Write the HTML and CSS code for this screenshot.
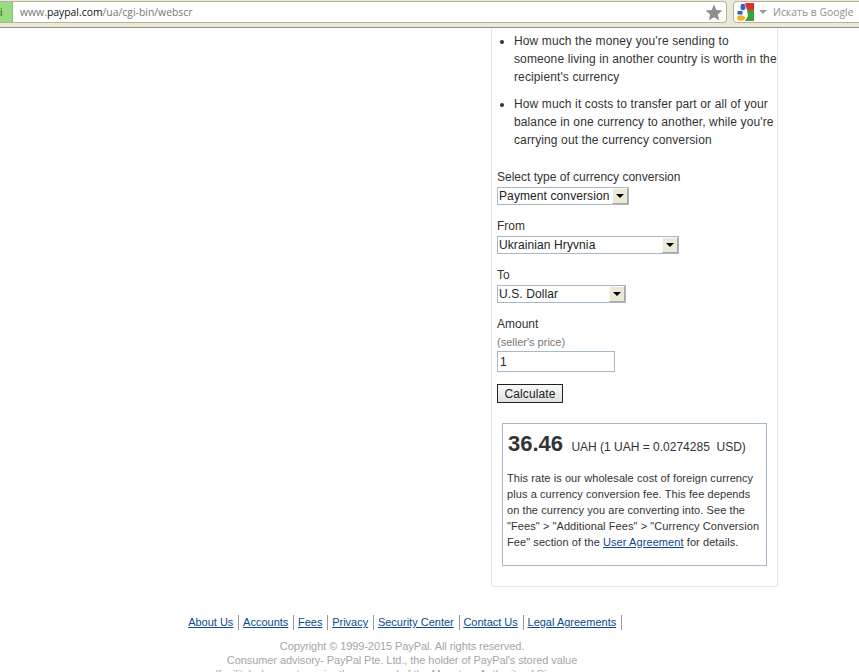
FILE: index.html
```html
<!DOCTYPE html>
<html lang="en">
<head>
    <meta charset="UTF-8">
    <meta name="viewport" content="width=device-width, initial-scale=1.0">
    <title>PayPal currency converter</title>
    <link rel="stylesheet" href="styles.css">
</head>
<body>

    <!-- Browser toolbar -->
    <div class="toolbar">
        <div class="address-bar">
            <span class="secure-tab">i</span>
            <span class="url">www.<b>paypal.com</b>/ua/cgi-bin/webscr</span>
            <svg class="star" width="18" height="17" viewBox="0 0 18 17">
                <path d="M9 0.5 L11.4 6 L17.4 6.5 L12.8 10.4 L14.2 16.3 L9 13.2 L3.8 16.3 L5.2 10.4 L0.6 6.5 L6.6 6 Z" fill="#8e8e8e"/>
            </svg>
        </div>
        <div class="search-bar">
            <svg class="google-icon" width="17" height="18" viewBox="0 0 17 18">
                <rect width="17" height="18" rx="2" fill="#fff"/>
                <path d="M8 0 H17 V7 H10 Z" fill="#d8322a"/>
                <path d="M10 7 H17 V18 H8 L11 13 Z" fill="#3f9e3c"/>
                <ellipse cx="6" cy="4" rx="2.5" ry="3.2" fill="#2f62c9"/>
                <rect x="0.5" y="8" width="5" height="3.5" fill="#2f62c9"/>
                <ellipse cx="4" cy="15" rx="4" ry="2.8" fill="#f0b323"/>
            </svg>
            <span class="search-caret"></span>
            <span class="search-text">Искать в Google</span>
        </div>
    </div>

    <div class="page">
        <div class="panel">
            <ul class="notes">
                <li>How much the money you're sending to someone living in another country is worth in the recipient's currency</li>
                <li>How much it costs to transfer part or all of your balance in one currency to another, while you're carrying out the currency conversion</li>
            </ul>

            <div class="field">
                <label>Select type of currency conversion</label>
                <div class="select select-type">
                    <select><option>Payment conversion</option></select>
                    <span class="arrow"></span>
                </div>
            </div>

            <div class="field">
                <label>From</label>
                <div class="select select-from">
                    <select><option>Ukrainian Hryvnia</option></select>
                    <span class="arrow"></span>
                </div>
            </div>

            <div class="field">
                <label>To</label>
                <div class="select select-to">
                    <select><option>U.S. Dollar</option></select>
                    <span class="arrow"></span>
                </div>
            </div>

            <div class="field">
                <label>Amount</label>
                <div class="hint">(seller's price)</div>
                <input class="amount" type="text" value="1">
            </div>

            <button class="calculate">Calculate</button>

            <div class="result">
                <div class="result-line"><strong>36.46</strong> <span>UAH (1 UAH = 0.0274285&nbsp; USD)</span></div>
                <p>This rate is our wholesale cost of foreign currency plus a currency conversion fee. This fee depends on the currency you are converting into. See the "Fees" &gt; "Additional Fees" &gt; "Currency Conversion Fee" section of the <a href="#">User Agreement</a> for details.</p>
            </div>
        </div>
    </div>

    <div class="footer">
        <ul class="footer-links">
            <li><a href="#">About Us</a></li>
            <li><a href="#">Accounts</a></li>
            <li><a href="#">Fees</a></li>
            <li><a href="#">Privacy</a></li>
            <li><a href="#">Security Center</a></li>
            <li><a href="#">Contact Us</a></li>
            <li><a href="#">Legal Agreements</a></li>
        </ul>
        <p class="copyright">Copyright © 1999-2015 PayPal. All rights reserved.<br>Consumer advisory- PayPal Pte. Ltd., the holder of PayPal's stored value<br>(facility), does not require the approval of the Monetary Authority of Singapore.</p>
    </div>

</body>
</html>
```

FILE: styles.css
```css
html, body {
    margin: 0;
    height: 672px;
    overflow: hidden;
}

body {
    font-family: "Liberation Sans", Arial, sans-serif;
    font-size: 12px;
    color: #333;
    background-color: #fff;
}

/* Browser toolbar */
.toolbar {
    display: flex;
    gap: 6px;
    height: 26px;
    padding-top: 1px;
    background: #ece9d8;
    border-bottom: 1px solid #8d8c80;
}

.address-bar {
    display: flex;
    align-items: center;
    flex: 1;
    height: 20px;
    background: #fff;
    border: 1px solid #b5b2a0;
    border-left: none;
    border-radius: 0 4px 4px 0;
}

.secure-tab {
    width: 12px;
    height: 20px;
    line-height: 20px;
    background: #9bdc82;
    border-right: 1px solid #86c46e;
    color: #2f6b1f;
    font-size: 11px;
}

.url {
    margin-left: 7px;
    flex: 1;
    font-family: "Open Sans", sans-serif;
    font-size: 10.4px;
    color: #777;
}

.url b {
    font-weight: normal;
    color: #111;
}

.star {
    margin-right: 3px;
}

.search-bar {
    display: flex;
    align-items: center;
    width: 125px;
    height: 20px;
    background: #fff;
    border: 1px solid #b5b2a0;
    border-right: none;
    border-radius: 4px 0 0 4px;
}

.google-icon {
    margin-left: 3px;
}

.search-caret {
    margin-left: 5px;
    border-top: 4px solid #999;
    border-left: 4px solid transparent;
    border-right: 4px solid transparent;
}

.search-text {
    margin-left: 6px;
    font-family: "Open Sans", sans-serif;
    font-size: 10.4px;
    color: #8f8f8f;
    white-space: nowrap;
}

/* Converter panel */
.page {
    padding-left: 491px;
}

.panel {
    width: 287px;
    height: 559px;
    box-sizing: border-box;
    padding: 4px 0 0 5px;
    border: 1px solid #e4e6e8;
    border-top: none;
    border-radius: 0 0 3px 3px;
}

.notes {
    margin: 0 0 19px;
    padding-left: 17px;
    line-height: 18px;
    letter-spacing: 0.12px;
}

.notes li {
    margin-bottom: 9px;
}

.field {
    margin-bottom: 12px;
}

.field label {
    display: block;
    margin-bottom: 1px;
    line-height: 18px;
}

.select {
    display: flex;
    height: 18px;
    box-sizing: border-box;
    border: 1px solid #a5b9cb;
}

.select select {
    flex: 1;
    min-width: 0;
    appearance: none;
    border: none;
    outline: none;
    padding: 0 0 0 1px;
    background: #fff;
    color: #222;
    font: 12px "Liberation Sans", Arial, sans-serif;
    letter-spacing: 0.1px;
}

.arrow {
    position: relative;
    width: 16px;
    box-sizing: border-box;
    background: #ece9d8;
    border: 1px solid;
    border-color: #fbfaf4 #aca899 #aca899 #fbfaf4;
}

.arrow::after {
    content: "";
    position: absolute;
    left: 3px;
    top: 5px;
    border-top: 4px solid #000;
    border-left: 4px solid transparent;
    border-right: 4px solid transparent;
}

.select-type { width: 132px; }
.select-from { width: 182px; }
.select-to { width: 129px; }

.hint {
    margin-top: 2px;
    font-size: 11px;
    line-height: 14px;
    color: #777;
}

.amount {
    display: block;
    width: 118px;
    height: 21px;
    margin-top: 2px;
    box-sizing: border-box;
    padding: 0 2px;
    border: 1px solid #a5b9cb;
    color: #222;
    font: 12px "Liberation Sans", Arial, sans-serif;
}

.calculate {
    display: block;
    width: 66px;
    height: 19px;
    padding: 0;
    background: linear-gradient(#fafafa, #e0e0e0);
    border: 1px solid #222;
    color: #222;
    font: 12px "Liberation Sans", Arial, sans-serif;
    letter-spacing: 0.12px;
}

.result {
    width: 265px;
    height: 143px;
    box-sizing: border-box;
    margin: 20px 0 0 5px;
    padding: 7px 5px 0 5px;
    border: 1px solid #a5b9cb;
}

.result-line {
    line-height: 26px;
    white-space: nowrap;
}

.result-line strong {
    font-size: 22px;
    margin-right: 5px;
}

.result p {
    margin: 10px 0 0 -1px;
    font-size: 11px;
    line-height: 16px;
    letter-spacing: 0.08px;
}

a {
    color: #0b4a8c;
}

/* Footer */
.footer {
    text-align: center;
    padding-top: 28px;
    padding-right: 55px;
}

.footer-links {
    display: flex;
    justify-content: center;
    margin: 0;
    padding: 0 0 0 10px;
    list-style: none;
    font-size: 11px;
    line-height: 15px;
}

.footer-links li {
    padding-right: 5px;
    margin-right: 3.7px;
    border-right: 1px solid #999;
}

.copyright {
    margin: 9px 0 0;
    font-size: 11px;
    line-height: 14px;
    letter-spacing: -0.08px;
    color: #a6a6a6;
}
```
